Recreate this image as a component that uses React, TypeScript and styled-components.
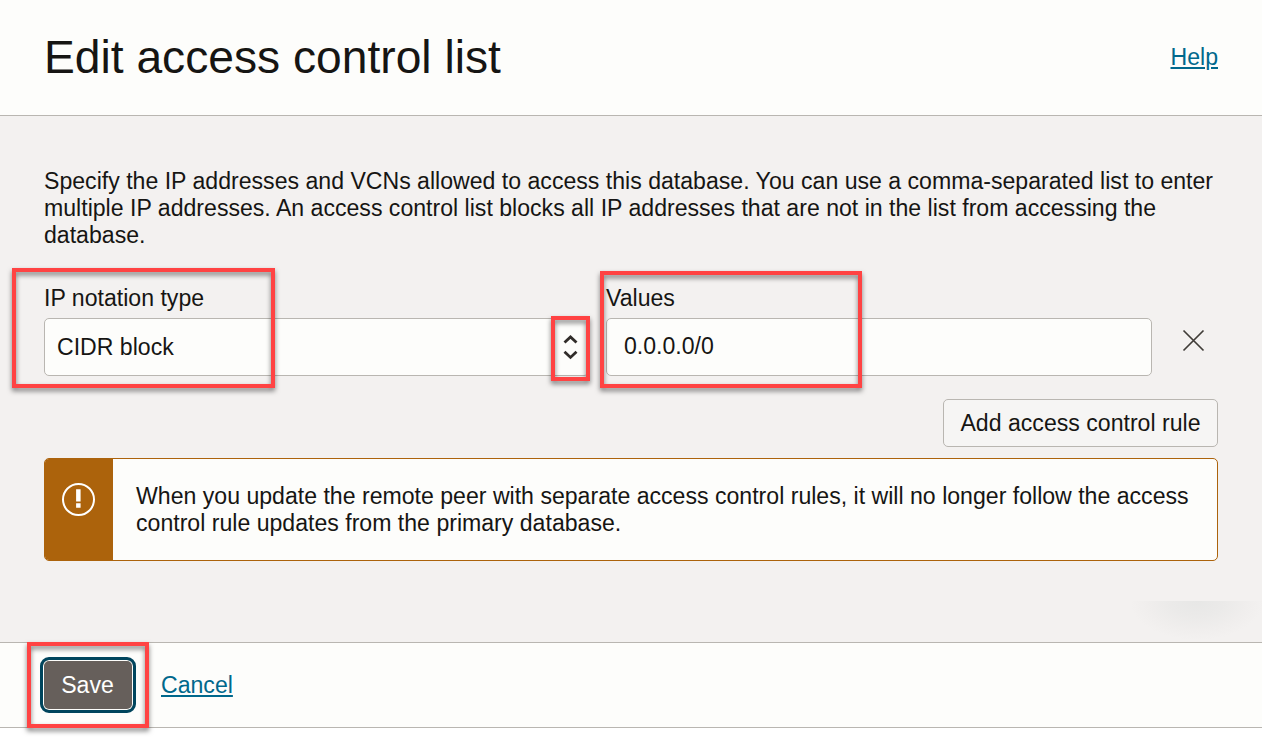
import React from "react";
import styled, { createGlobalStyle } from "styled-components";

const GlobalStyle = createGlobalStyle`
  * { box-sizing: border-box; }
  body {
    margin: 0;
    background: #ffffff;
    color: #161513;
    font-family: "Liberation Sans", Arial, sans-serif;
    font-size: 23.1px;
    line-height: 27px;
  }
`;

const Dialog = styled.div`
  display: flex;
  flex-direction: column;
  width: 1262px;
  height: 740px;
  overflow: hidden;
`;

const Header = styled.header`
  display: flex;
  align-items: center;
  justify-content: space-between;
  height: 116px;
  padding: 0 44px;
  background: #fdfdfb;
  border-bottom: 1px solid #b9b6b1;
`;

const Title = styled.h1`
  margin: 0;
  padding-bottom: 2px;
  font-size: 46.2px;
  font-weight: 400;
  line-height: 54px;
  white-space: nowrap;
`;

const Link = styled.a`
  color: #00688c;
  text-decoration: underline;
  text-decoration-thickness: 2px;
  text-underline-offset: 2px;
`;

const Body = styled.main`
  display: flex;
  flex-direction: column;
  position: relative;
  height: 526px;
  padding: 52px 44px 0;
  background: #f3f1f0;
`;

const Intro = styled.p`
  margin: 0;
`;

const Line = styled.span`
  display: block;
  white-space: nowrap;
`;

const Rule = styled.div`
  display: flex;
  align-items: flex-end;
  margin-top: 36px;
`;

const Field = styled.div<{ $width: number; $gap: number }>`
  display: flex;
  flex-direction: column;
  gap: 6px;
  position: relative;
  width: ${(p) => p.$width}px;
  margin-right: ${(p) => p.$gap}px;
`;

const Label = styled.label`
  white-space: nowrap;
`;

const Control = styled.div<{ $indent: number; $lift?: number }>`
  display: flex;
  align-items: center;
  justify-content: space-between;
  height: 58px;
  padding: 0 10px ${(p) => p.$lift ?? 0}px ${(p) => p.$indent}px;
  background: #fdfdfb;
  border: 1px solid #b9b6b1;
  border-radius: 5px;
`;

const RemoveButton = styled.button`
  display: flex;
  align-items: center;
  justify-content: center;
  width: 23px;
  height: 71px;
  padding: 0;
  border: 0;
  background: none;
`;

const AddButton = styled.button`
  align-self: flex-end;
  width: 275px;
  height: 48px;
  margin-top: 23px;
  padding: 0;
  font: inherit;
  color: inherit;
  white-space: nowrap;
  background: #f6f5f4;
  border: 1px solid #b9b6b1;
  border-radius: 5px;
`;

const Alert = styled.section`
  display: flex;
  height: 103px;
  margin-top: 11px;
  overflow: hidden;
  background: #fdfdfb;
  border: 1px solid #ac630c;
  border-radius: 5px;
`;

const AlertBadge = styled.div`
  display: flex;
  justify-content: center;
  width: 68px;
  padding-top: 24px;
  background: #ac630c;
`;

const AlertText = styled.p`
  margin: 0;
  padding: 24px 0 0 23px;
`;

const Glow = styled.div`
  position: absolute;
  right: 0;
  bottom: 0;
  width: 134px;
  height: 41px;
  background: radial-gradient(ellipse 67px 39px at 69px 0, #e7e7e6 0, #ebeae9 40%, #f0eeed 75%, #f3f1f0 100%);
`;

const Footer = styled.footer`
  display: flex;
  align-items: center;
  gap: 25px;
  height: 86px;
  padding: 0 40px;
  background: #fdfdfb;
  border-top: 1px solid #b9b6b1;
  border-bottom: 1px solid #b9b6b1;
`;

const SaveSlot = styled.div`
  position: relative;
  width: 96px;
  height: 56px;
`;

const SaveButton = styled.button`
  width: 96px;
  height: 56px;
  padding: 0 1px 0 0;
  font: inherit;
  color: #ffffff;
  background: #665f5b;
  border: 3px solid #00455d;
  border-radius: 9px;
  box-shadow: inset 0 0 0 1px #fdfdfb;
`;

const Highlight = styled.div<{ $left: number; $top: number; $w: number; $h: number }>`
  position: absolute;
  z-index: 1;
  left: ${(p) => p.$left}px;
  top: ${(p) => p.$top}px;
  width: ${(p) => p.$w}px;
  height: ${(p) => p.$h}px;
  border: 4px solid #ff4343;
  filter: drop-shadow(0 3px 2.5px rgba(0, 0, 0, 0.5));
  pointer-events: none;
`;

const SortIcon = () => (
  <svg width="16" height="26" viewBox="0 0 16 26" fill="none" stroke="#312d2a" strokeWidth="2.8">
    <path d="M2.5 8.6 8.5 2.9l6 5.7M2.5 17.7l6 5.7 6-5.7" />
  </svg>
);

const CloseIcon = () => (
  <svg width="23" height="23" viewBox="0 0 23 23" fill="none" stroke="#403c38" strokeWidth="1.7">
    <path d="M1.5 1.5l20 20M21.5 1.5l-20 20" />
  </svg>
);

const WarningIcon = () => (
  <svg width="34" height="34" viewBox="0 0 34 34" fill="none">
    <circle cx="16.5" cy="16.5" r="15.5" stroke="#fff" strokeWidth="2" />
    <path d="M14.1 6.2h4.5v12.4h-4.5zM14.1 20.2h4.5v4.5h-4.5z" fill="#fff" />
  </svg>
);

export default function App() {
  return (
    <>
      <GlobalStyle />
      <Dialog>
        <Header>
          <Title>Edit access control list</Title>
          <Link>Help</Link>
        </Header>
        <Body>
          <Intro>
            <Line>Specify the IP addresses and VCNs allowed to access this database. You can use a comma-separated list to enter</Line>
            <Line>multiple IP addresses. An access control list blocks all IP addresses that are not in the list from accessing the</Line>
            <Line>database.</Line>
          </Intro>
          <Rule>
            <Field $width={545} $gap={17}>
              <Label>IP notation type</Label>
              <Control $indent={12}>
                CIDR block
                <SortIcon />
              </Control>
              <Highlight $left={-32} $top={-17} $w={263} $h={120} />
              <Highlight $left={507} $top={31} $w={39} $h={65} />
            </Field>
            <Field $width={546} $gap={30}>
              <Label>Values</Label>
              <Control $indent={17} $lift={2}>0.0.0.0/0</Control>
              <Highlight $left={-6} $top={-14} $w={262} $h={117} />
            </Field>
            <RemoveButton aria-label="Remove rule">
              <CloseIcon />
            </RemoveButton>
          </Rule>
          <AddButton>Add access control rule</AddButton>
          <Alert>
            <AlertBadge>
              <WarningIcon />
            </AlertBadge>
            <AlertText>
              <Line>When you update the remote peer with separate access control rules, it will no longer follow the access</Line>
              <Line>control rule updates from the primary database.</Line>
            </AlertText>
          </Alert>
          <Glow />
        </Body>
        <Footer>
          <SaveSlot>
            <SaveButton>Save</SaveButton>
            <Highlight $left={-13} $top={-15} $w={122} $h={86} />
          </SaveSlot>
          <Link>Cancel</Link>
        </Footer>
      </Dialog>
    </>
  );
}
